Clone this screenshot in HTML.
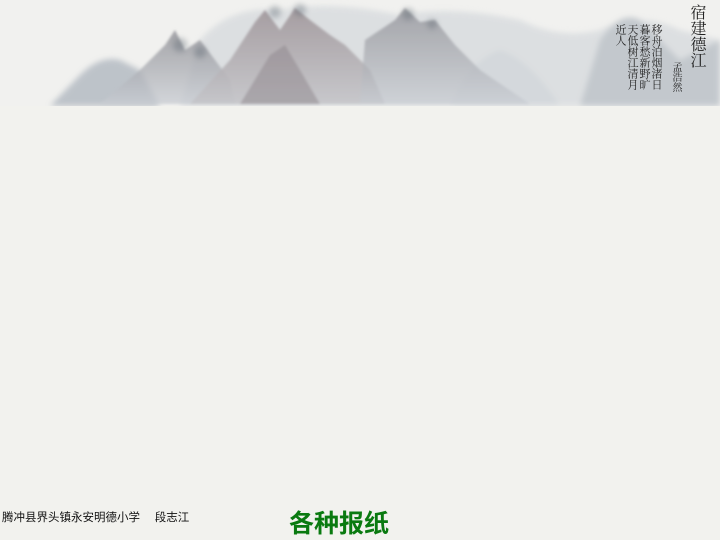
<!DOCTYPE html>
<html><head><meta charset="utf-8">
<style>
html,body{margin:0;padding:0}
body{width:720px;height:540px;background:#f2f2ee;position:relative;overflow:hidden;font-family:"Liberation Sans","Noto Sans CJK SC",sans-serif}
.cap{position:absolute;left:2px;top:509px;font-size:11.5px;color:#111;letter-spacing:0;white-space:nowrap}
.title{position:absolute;left:289px;top:504px;font-size:25px;font-weight:bold;color:#0a7a10;white-space:nowrap}
.v{position:absolute;writing-mode:vertical-rl;font-family:"Liberation Serif","Noto Serif CJK SC",serif;color:#222}
</style></head><body>
<svg width="720" height="106" style="position:absolute;left:0;top:0">
<defs>
<filter id="b" x="-20%" y="-20%" width="140%" height="140%"><feGaussianBlur stdDeviation="3"/></filter>
<filter id="b2"><feGaussianBlur stdDeviation="1.2"/></filter>
<linearGradient id="m1" x1="0" y1="0" x2="0" y2="1"><stop offset="0" stop-color="#8a8a90"/><stop offset="1" stop-color="#c8ccd2"/></linearGradient>
<linearGradient id="m2" x1="0" y1="0" x2="0" y2="1"><stop offset="0" stop-color="#9c9296"/><stop offset="1" stop-color="#c4c4c8"/></linearGradient>
</defs>
<rect width="720" height="106" fill="#f1f1ef"/>
<g filter="url(#b)" opacity="0.7">
<path d="M200 40 Q230 5 280 10 Q330 0 400 15 Q450 5 520 20 Q560 40 600 30 Q640 10 680 30 L720 40 L720 106 L180 106Z" fill="#d4d8dc"/>
<path d="M50 106 L80 75 Q100 55 120 60 L140 70 L160 106Z" fill="#a8b0ba"/>
<path d="M580 106 L600 40 Q620 10 640 20 L680 60 L720 40 L720 106Z" fill="#b0b8c0"/>
<path d="M450 106 Q470 60 500 50 Q530 60 560 106Z" fill="#c8ced4"/>
</g>
<g filter="url(#b2)">
<path d="M100 104 L140 70 L165 45 L175 30 L185 50 L200 40 L215 60 L230 80 L235 104Z" fill="url(#m1)" opacity="0.75"/>
<path d="M190 104 L230 60 L255 22 L265 10 L280 30 L295 8 L310 20 L330 35 L345 45 L370 70 L385 104Z" fill="url(#m2)" opacity="0.85"/>
<path d="M240 104 L270 55 L285 45 L300 70 L320 104Z" fill="#8e868c" opacity="0.5"/>
<path d="M360 104 L365 40 L380 30 L395 20 L405 8 L420 22 L435 20 L455 45 L480 70 L530 104Z" fill="url(#m1)" opacity="0.7"/>
</g>
<g fill="#55606a" opacity="0.35" filter="url(#b)">
<circle cx="180" cy="45" r="7"/><circle cx="200" cy="52" r="6"/><circle cx="275" cy="12" r="6"/><circle cx="300" cy="10" r="6"/><circle cx="408" cy="14" r="6"/><circle cx="432" cy="24" r="5"/>
</g>
</svg>
<div class="v" style="left:688px;top:4px;font-size:16px;line-height:17px">宿建德江</div>
<div class="v" style="left:670px;top:62px;font-size:10px;line-height:11px">孟浩然</div>
<div class="v" style="left:612px;top:24px;font-size:11px;line-height:12px;height:72px;width:50px">移舟泊烟渚日暮客愁新野旷天低树江清月近人</div>
<div class="cap">腾冲县界头镇永安明德小学　 段志江</div>
<div class="title">各种报纸</div>
</body></html>
